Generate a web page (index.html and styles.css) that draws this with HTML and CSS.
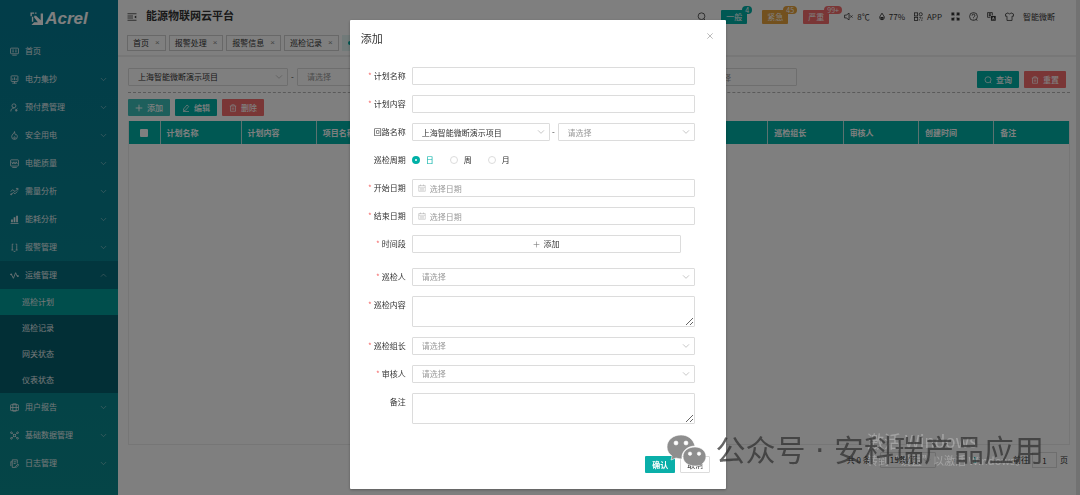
FILE: index.html
```html
<!DOCTYPE html>
<html lang="zh-CN">
<head>
<meta charset="utf-8">
<meta name="viewport" content="width=device-width, initial-scale=1">
<title>能源物联网云平台</title>
<link rel="stylesheet" href="styles.css">
</head>
<body>
<svg class="defs" aria-hidden="true">
  <symbol id="down" viewBox="0 0 12 12"><path d="M1.5 3.5 6 8l4.500-4.500"/></symbol>
  <symbol id="up" viewBox="0 0 12 12"><path d="M1.500 8 6 3.500 10.500 8"/></symbol>
  <symbol id="plus" viewBox="0 0 12 12"><path d="M6 1v10M1 6h10"/></symbol>
  <symbol id="trash" viewBox="0 0 16 16"><path d="M1.500 4h13M5.500 4V1.500h5V4M3 4v10.500h10V4M6.500 7v4.500M9.500 7v4.500"/></symbol>
  <symbol id="edit" viewBox="0 0 16 16"><path d="M3 10 10 2l3.500 3L7 12.500l-4 .8zM2 15h12"/></symbol>
  <symbol id="search" viewBox="0 0 16 16"><circle cx="8" cy="7.500" r="6"/><path d="m12 12 2.500 2.500"/></symbol>
  <symbol id="calendar" viewBox="0 0 16 16"><path d="M1.500 3h13v11.500h-13zM1.500 6.500h13M5 1v3M11 1v3M4 9.500h8M4 12h8"/></symbol>
</svg>
<div class="app">
  <aside class="sidebar">
    <div class="logo">
      <svg class="logo-mark" viewBox="0 0 28 28"><path d="M1 9V1h8v3H4v5zM4 10h3v11H4zM11 1h3v3h-3zM23 3h5v25H3l6-6h8L9 12V8h4l10 10z"/></svg>
      <span>Acrel</span>
    </div>
    <nav class="menu">
      <a class="item" href="#"><svg class="ico" viewBox="0 0 16 16"><rect x="1" y="2" width="14" height="10" rx="1"/><path d="M4 5.500h3M4 8.500h3M9 5.500h3M9 8.500h3M4 14.500h8"/></svg><span>首页</span></a>
      <a class="item" href="#"><svg class="ico" viewBox="0 0 16 16"><rect x="2" y="1.500" width="12" height="10" rx="1"/><path d="M5 9V6M8 9V4M11 9V6M8 12v3M4 14.500h8"/></svg><span>电力集抄</span><svg class="arrow"><use href="#down"/></svg></a>
      <a class="item" href="#"><svg class="ico" viewBox="0 0 16 16"><circle cx="7" cy="5" r="3.500"/><path d="M1.500 15c0-4 2-6 5.500-6M9 10l2 2 2-2M11 12v3.500M9 13h4.500"/></svg><span>预付费管理</span><svg class="arrow"><use href="#down"/></svg></a>
      <a class="item" href="#"><svg class="ico" viewBox="0 0 16 16"><path d="M8 1c0 3-5 5-5 9a5 5 0 0 0 10 0c0-2-1-3.500-2-4-1 2-2 1-3-5z"/><path d="M8 14c-2-1.500-1-3 0-4 1 1 2 2.500 0 4z"/></svg><span>安全用电</span><svg class="arrow"><use href="#down"/></svg></a>
      <a class="item" href="#"><svg class="ico" viewBox="0 0 16 16"><rect x="1" y="1.500" width="14" height="11" rx="1"/><path d="m3 5 2 4 2-4 2 4 2-4 2 4M4 15h8"/></svg><span>电能质量</span><svg class="arrow"><use href="#down"/></svg></a>
      <a class="item" href="#"><svg class="ico" viewBox="0 0 16 16"><path d="m1 8 4-3 4 3 5-5M10.500 2.500H14V6M2 13l4-3 3 2 4-4"/><circle cx="2" cy="13" r="1"/></svg><span>需量分析</span><svg class="arrow"><use href="#down"/></svg></a>
      <a class="item" href="#"><svg class="ico solid" viewBox="0 0 16 16"><path d="M2 8h3v5H2zM6.500 4h3v9h-3zM11 1.500h3V13h-3zM1 14h14v1.500H1z"/></svg><span>能耗分析</span><svg class="arrow"><use href="#down"/></svg></a>
      <a class="item" href="#"><svg class="ico" viewBox="0 0 16 16"><path d="M6 2H4v2M10 2h2v2M4 4v8.500M12 4v8.500M2.500 12.500H6M10 12.500h3.500M6.500 15h3"/></svg><span>报警管理</span><svg class="arrow"><use href="#down"/></svg></a>
      <a class="item open" href="#"><svg class="ico" viewBox="0 0 16 16"><path d="M1 6h1.500L6 13l4-10 2.500 6H15"/><circle cx="2" cy="6" r="1"/><circle cx="14" cy="9" r="1"/></svg><span>运维管理</span><svg class="arrow"><use href="#up"/></svg></a>
      <div class="submenu">
        <a class="active" href="#">巡检计划</a>
        <a href="#">巡检记录</a>
        <a href="#">网关状态</a>
        <a href="#">仪表状态</a>
      </div>
      <a class="item" href="#"><svg class="ico" viewBox="0 0 16 16"><rect x="1" y="3" width="14" height="10.500" rx="1"/><path d="M5 1.500v13M11 1.500v13M1 8h14M5 1.500h6M5 14.500h6"/></svg><span>用户报告</span><svg class="arrow"><use href="#down"/></svg></a>
      <a class="item" href="#"><svg class="ico" viewBox="0 0 16 16"><circle cx="2.500" cy="3" r="1.500"/><circle cx="13.500" cy="3" r="1.500"/><circle cx="2.500" cy="13" r="1.500"/><circle cx="13.500" cy="13" r="1.500"/><circle cx="8" cy="8" r="2"/><path d="m4 4 3 3M12 4 9 7M4 12l3-3M12 12 9 9"/></svg><span>基础数据管理</span><svg class="arrow"><use href="#down"/></svg></a>
      <a class="item" href="#"><svg class="ico" viewBox="0 0 16 16"><path d="M13 8V1.500H4V15h5M1.500 4.500v8M1.500 5H4M6.500 5H11M6.500 8H10M9 14l5-5 1.500 1.500-5 5z"/></svg><span>日志管理</span><svg class="arrow"><use href="#down"/></svg></a>
    </nav>
  </aside>

  <div class="main">
    <header class="header">
      <div class="topbar">
        <svg class="fold" viewBox="0 0 20 16"><path d="M1 1.500h18M1 6h11M1 10h11M1 14.500h18"/><path class="fill" d="m18.500 5-4 3 4 3z"/></svg>
        <h1>能源物联网云平台</h1>
        <div class="alerts">
          <svg class="ico"><use href="#search"/></svg>
          <span class="tag teal">一般<b>4</b></span>
          <span class="tag amber">紧急<b>45</b></span>
          <span class="tag red">严重<b>99+</b></span>
        </div>
        <div class="tools">
          <span class="tool"><svg class="ico" viewBox="0 0 16 16"><path d="M1 5.500h3L9 2v12l-5-3.500H1zM11 6l4 4M15 6l-4 4"/></svg>8℃</span>
          <span class="tool"><svg class="ico drop" viewBox="0 0 12 16"><path d="M6 1.500C4 5 1.500 7 1.500 10a4.500 4.500 0 0 0 9 0C10.500 7 8 5 6 1.500z"/><path d="M3 10h6M4 12.500h4"/></svg>77%</span>
          <span class="tool"><svg class="ico" viewBox="0 0 16 16"><rect x="1" y="1.500" width="5.500" height="5.500"/><circle cx="12" cy="4" r="2.800"/><rect x="1" y="9.500" width="5.500" height="5.500"/><path d="M9.500 9.500h2v2M14.500 9.500v2.500M9.500 15v-2M12.500 14.500h2.500"/></svg>APP</span>
          <svg class="ico bold" viewBox="0 0 16 16"><path d="M2 6V2h4M2 2l4 4M10 2h4v4M14 2l-4 4M2 10v4h4M2 14l4-4M14 10v4h-4M14 14l-4-4"/></svg>
          <svg class="ico" viewBox="0 0 16 16"><circle cx="8" cy="8" r="7"/><path d="M5.500 6.500a2.500 2.500 0 1 1 3.500 2c-1 .5-1 1-1 2M8 12v1.200M12 13l3 2"/></svg>
          <svg class="ico" viewBox="0 0 16 16"><path d="M9.500 6V1H1v8.500h5M3 3.500h4.500M3 6h4M5 2v6"/><path class="fill" d="M7 7h8.500v8.500H7z"/><path class="cut" d="m9.500 13.500 1.700-4.500 1.800 4.500M10 12h2.500"/></svg>
          <svg class="ico" viewBox="0 0 16 16"><path d="M5.500 1.500 1 3.500v4h2.500v7.500h9V7.500H15v-4l-4.500-2C10 4 6 4 5.500 1.500z"/></svg>
          <span>智能微断</span>
        </div>
      </div>
      <nav class="tabs">
        <a href="#">首页<i>×</i></a>
        <a href="#">报警处理<i>×</i></a>
        <a href="#">报警信息<i>×</i></a>
        <a href="#">巡检记录<i>×</i></a>
        <a class="current" href="#">巡检计划<i>×</i></a>
      </nav>
    </header>

    <main class="content">
      <div class="filter">
        <div class="fields">
          <div class="control"><select aria-label="项目"><option>上海智能微断演示项目</option></select><svg class="chev"><use href="#down"/></svg></div>
          <span class="dash">-</span>
          <div class="control wide"><select class="empty" aria-label="回路"><option>请选择</option></select><svg class="chev"><use href="#down"/></svg></div>
          <div class="control"><input type="text" aria-label="巡检人" placeholder="请选择"></div>
        </div>
        <div class="actions">
          <button class="btn teal"><svg class="ico"><use href="#search"/></svg>查询</button>
          <button class="btn red"><svg class="ico"><use href="#trash"/></svg>重置</button>
        </div>
      </div>
      <div class="actions bar">
        <button class="btn mint"><svg class="ico"><use href="#plus"/></svg>添加</button>
        <button class="btn teal"><svg class="ico"><use href="#edit"/></svg>编辑</button>
        <button class="btn red"><svg class="ico"><use href="#trash"/></svg>删除</button>
      </div>
      <div class="grid">
        <table>
          <colgroup><col class="c-check"><col class="c-name"><col span="11"></colgroup>
          <thead><tr>
            <th class="pick"><input type="checkbox" aria-label="全选"></th>
            <th>计划名称</th><th>计划内容</th><th>项目名称</th><th>巡检周期</th><th>开始日期</th><th>结束日期</th><th>巡检内容</th><th>巡检人</th><th>巡检组长</th><th>审核人</th><th>创建时间</th><th>备注</th>
          </tr></thead>
        </table>
      </div>
      <footer class="pager">
        <span>共 0 条</span>
        <div class="control size"><select aria-label="每页条数"><option>15条/页</option></select><svg class="chev"><use href="#down"/></svg></div>
        <span class="faint">‹</span><span class="page">1</span><span class="faint">›</span>
        <label class="jump">前往<input type="text" value="1">页</label>
      </footer>
    </main>
  </div>
</div>

<div class="activate"><p class="big">激活 Windows</p><p>转到“设置”以激活 Windows。</p></div>

<div class="mask">
  <form class="dialog" role="dialog" aria-label="添加">
    <div class="dialog-head"><h2>添加</h2><button type="button" class="close" aria-label="关闭"><svg viewBox="0 0 12 12"><path d="m2 2 8 8M10 2l-8 8"/></svg></button></div>
    <div class="row"><label class="req" for="f1">计划名称</label><div class="control"><input id="f1" type="text"></div></div>
    <div class="row"><label class="req" for="f2">计划内容</label><div class="control"><input id="f2" type="text"></div></div>
    <div class="row"><label for="f3">回路名称</label>
      <div class="pair">
        <div class="control"><select id="f3"><option>上海智能微断演示项目</option></select><svg class="chev"><use href="#down"/></svg></div>
        <span>-</span>
        <div class="control"><select class="empty" aria-label="回路"><option>请选择</option></select><svg class="chev"><use href="#down"/></svg></div>
      </div>
    </div>
    <div class="row"><span class="label">巡检周期</span>
      <div class="radios">
        <label><input type="radio" name="cycle" checked>日</label>
        <label><input type="radio" name="cycle">周</label>
        <label><input type="radio" name="cycle">月</label>
      </div>
    </div>
    <div class="row"><label class="req" for="f5">开始日期</label><div class="control date"><svg class="cal"><use href="#calendar"/></svg><input id="f5" type="text" placeholder="选择日期"></div></div>
    <div class="row"><label class="req" for="f6">结束日期</label><div class="control date"><svg class="cal"><use href="#calendar"/></svg><input id="f6" type="text" placeholder="选择日期"></div></div>
    <div class="row spaced"><label class="req" for="f7">时间段</label><div class="slot"><button id="f7" type="button" class="add"><svg><use href="#plus"/></svg>添加</button></div></div>
    <div class="row"><label class="req" for="f8">巡检人</label><div class="control"><select id="f8" class="empty"><option>请选择</option></select><svg class="chev"><use href="#down"/></svg></div></div>
    <div class="row"><label class="req" for="f9">巡检内容</label><textarea id="f9"></textarea></div>
    <div class="row"><label class="req" for="f10">巡检组长</label><div class="control"><select id="f10" class="empty"><option>请选择</option></select><svg class="chev"><use href="#down"/></svg></div></div>
    <div class="row"><label class="req" for="f11">审核人</label><div class="control"><select id="f11" class="empty"><option>请选择</option></select><svg class="chev"><use href="#down"/></svg></div></div>
    <div class="row"><label for="f12">备注</label><textarea id="f12"></textarea></div>
    <div class="dialog-foot"><button type="button" class="ok">确认</button><button type="button" class="cancel">取消</button></div>
  </form>
</div>

<div class="brand">
  <svg viewBox="0 0 40 34"><path fill-rule="evenodd" d="M15 1C7 1 1 6 1 13c0 4 2 7 5 9l-1 4 5-2c2 .6 4 1 6 1-1-7 5-13 13-13C27 5 22 1 15 1zM10 7a2 2 0 1 1 0 4 2 2 0 0 1 0-4zm10 0a2 2 0 1 1 0 4 2 2 0 0 1 0-4z"/><path fill-rule="evenodd" d="M29 13c-7 0-12 4-12 9.500S22 32 29 32c1.500 0 3-.2 4-.6l4 2-1-3.400c2.500-2 4-4.500 4-7.500C40 17 35 13 29 13zm-5 5a1.700 1.700 0 1 1 0 3.400 1.700 1.700 0 0 1 0-3.400zm9 0a1.700 1.700 0 1 1 0 3.400 1.700 1.700 0 0 1 0-3.400z"/></svg>
  <span>公众号 · 安科瑞产品应用</span>
</div>
</body>
</html>
```
FILE: styles.css
```css
* { box-sizing: border-box; margin: 0; }

body {
  font: 8px/12px "Noto Sans CJK SC", "Noto Sans", sans-serif;
  color: #333;
  background: #fff;
}

a { color: inherit; text-decoration: none; }
button, input, select, textarea { font: inherit; color: inherit; }
svg { fill: none; stroke: currentColor; flex: none; }
.defs { display: none; }
.fill { fill: currentColor; stroke: none; }
.ico { width: 9px; height: 9px; stroke-width: 1.4; }
.ico.solid { fill: currentColor; stroke: none; }
.ico.bold { stroke-width: 2.4; }
.ico.drop { width: 6px; stroke-width: 2; }
.cut { stroke: #fff; }

.app { display: flex; min-height: 100vh; }

/* Sidebar */
.sidebar {
  width: 118px;
  flex: none;
  color: #e8f0f2;
  background: linear-gradient(#047a92, #0a8a8e);
}
.logo {
  display: flex;
  align-items: center;
  justify-content: center;
  gap: 2px;
  height: 37px;
  color: #fff;
  font: italic bold 17px/20px "Liberation Sans", Arial, sans-serif;
}
.logo-mark { width: 13px; height: 13px; fill: currentColor; stroke: none; }
.item {
  display: flex;
  align-items: center;
  gap: 6px;
  height: 28px;
  padding: 0 11px 0 10px;
}
.item span { flex: 1; }
.arrow { width: 7px; height: 7px; opacity: .7; }
.item.open { background: #046c7c; }
.submenu { background: #045e6c; }
.submenu a { display: block; padding: 7px 0 7px 22px; }
.submenu .active { background: #009c98; }

/* Header */
.main { flex: 1; min-width: 0; display: flex; flex-direction: column; border-right: 4px solid #e4e4e4; }
.header { border-bottom: 2px solid #eee; padding: 0 9px 4px; }
.topbar { display: flex; align-items: center; height: 35px; padding: 0 12px 2px 0; }
.fold { width: 10px; height: 8px; stroke-width: 1.6; margin-right: 9px; }
h1 { font-size: 11px; line-height: 16px; font-weight: 600; flex: 1; padding-bottom: 4px; }
.alerts { display: flex; align-items: center; gap: 15px; margin-right: 15px; }
.tag { position: relative; padding: 1px 5px; border-radius: 1px; color: #fff; }
.tag b {
  position: absolute;
  left: 21px;
  top: -4px;
  padding: 0 3px;
  border-radius: 4px;
  font-size: 7px;
  line-height: 8px;
  font-weight: 400;
  background: inherit;
}
.teal { background: #00b0a6; }
.amber { background: #e6a23c; }
.red { background: #f56c6c; }
.mint { background: #3cbfb8; }
.tools { display: flex; align-items: center; gap: 9px; }
.tool { display: flex; align-items: center; gap: 4px; }
.tabs { display: flex; gap: 3px; }
.tabs a {
  display: flex;
  align-items: center;
  gap: 6px;
  height: 16px;
  padding: 0 5px;
  border: 1px solid #d0d0d0;
}
.tabs i { font-family: "Liberation Sans", Arial, sans-serif; font-style: normal; color: #888; }
.tabs .current { gap: 4px; background: #e2f5f3; border-color: #e2f5f3; }
.tabs .current::before { content: ""; width: 4px; height: 4px; border-radius: 50%; background: #00b0a6; }

/* Content */
.content { flex: 1; display: flex; flex-direction: column; padding: 11px 6px 0 10px; }
.filter {
  display: flex;
  justify-content: space-between;
  padding-bottom: 4px;
  border-bottom: 1px dashed #b4b4b4;
}
.fields { display: flex; width: 71%; height: 18px; }
.fields .control { flex: 0 0 160px; }
.fields .control.wide { margin-right: 240px; }
.fields .control:last-child { flex: 1; min-width: 0; }
.dash { width: 9px; text-align: center; line-height: 18px; }
.actions { display: flex; gap: 5px; }
.filter .actions { padding: 3px 4px 0 0; }
.bar { padding: 6px 0 5px; }
.btn {
  display: flex;
  align-items: center;
  justify-content: center;
  gap: 4px;
  width: 42px;
  height: 17px;
  padding: 0;
  border: 0;
  border-radius: 1px;
  color: #fff;
  font-weight: 500;
}
.btn .ico { width: 8px; height: 8px; }
.grid { flex: 1; border: 1px solid #ececec; border-top: 0; }
table { width: 100%; table-layout: fixed; border-collapse: collapse; }
.c-check { width: 31px; }
.c-name { width: 81px; }
th {
  height: 23px;
  padding: 0 6px;
  text-align: left;
  font-weight: 600;
  color: #fff;
  background: #00b0a6;
  border-right: 1px solid #b8e4e0;
  white-space: nowrap;
}
th:last-child { border-right: 0; }
.pick { text-align: center; padding: 0; }
.pick input { appearance: none; width: 8px; height: 8px; margin: 0; background: #fff; vertical-align: middle; border-radius: 1px; }
.pager { display: flex; align-items: center; justify-content: flex-end; gap: 9px; height: 50px; padding: 0 2px 20px 0; }
.pager .size { flex: 0 0 56px; height: 16px; }
.faint { color: #aaa; padding: 0 8px; }
.page { color: #00b0a6; }
.jump { display: flex; align-items: center; gap: 3px; }
.jump input { width: 25px; height: 16px; text-align: center; border: 1px solid #ddd; padding: 0; background: #fff; }

/* Form controls */
.control { position: relative; flex: 1; min-width: 0; height: 18px; }
.control input, .control select {
  display: block;
  width: 100%;
  height: 100%;
  padding: 0 9px;
  border: 1px solid #dcdcdc;
  border-radius: 1px;
  background: #fff;
  appearance: none;
  outline: 0;
}
.control select.empty { color: #999; }
::placeholder { color: #999; opacity: 1; }
.chev { position: absolute; right: 5px; top: 5px; width: 8px; height: 8px; color: #aaa; }
.date input { padding-left: 17px; }
.cal { position: absolute; left: 6px; top: 5px; width: 8px; height: 8px; color: #aaa; }

/* Dialog */
.mask {
  position: fixed;
  inset: 0;
  padding: 20px 4px 0 0;
  background: rgba(0, 0, 0, .5);
}
.dialog {
  width: 35%;
  min-width: 300px;
  margin: 0 auto;
  padding: 10px 31px 16px 0;
  border-radius: 1px;
  background: #fff;
  box-shadow: 0 1px 3px rgba(0, 0, 0, .3);
}
.dialog-head { display: flex; justify-content: space-between; margin: 0 -20px 21px 11px; }
h2 { font-size: 11px; line-height: 16px; font-weight: 400; }
.close { border: 0; background: none; padding: 0; width: 9px; height: 12px; color: #999; }
.close svg { display: block; width: 8px; height: 8px; }
.row { display: flex; align-items: flex-start; margin-bottom: 10px; }
.row > label, .row > .label { width: 62px; padding-right: 6px; text-align: right; line-height: 18px; }
.req::before { content: "*"; color: #f56c6c; margin-right: 2px; }
.pair { flex: 1; display: grid; grid-template-columns: 1fr 8px 1fr; text-align: center; line-height: 18px; }
.radios { display: flex; gap: 16px; height: 18px; align-items: center; }
.radios label { display: flex; align-items: center; gap: 6px; }
.radios input { appearance: none; width: 8px; height: 8px; margin: 0; border: 1px solid #dcdcdc; border-radius: 50%; background: #fff; }
.radios input:checked { border: 3px solid #00b0a6; }
.radios label:has(:checked) { color: #00b0a6; }
.slot { flex: 1; }
.add {
  display: flex;
  align-items: center;
  justify-content: center;
  gap: 3px;
  width: 95%;
  height: 18px;
  border: 1px solid #dcdcdc;
  border-radius: 1px;
  background: #fff;
}
.add svg { width: 7px; height: 7px; color: #777; }
.spaced { margin-bottom: 15px; }
textarea { flex: 1; height: 31px; border: 1px solid #dcdcdc; border-radius: 1px; resize: vertical; background: #fff; }
.dialog-foot { display: flex; justify-content: flex-end; gap: 5px; margin: 32px -15px 0 0; }
.dialog-foot button { width: 30px; height: 17px; padding: 0; border-radius: 1px; }
.ok { border: 0; background: #0aafa9; color: #fff; font-weight: 600; }
.cancel { border: 1px solid #dcdcdc; background: #fff; }

/* Overlaid marks */
.activate { position: fixed; z-index: 2; right: 40px; bottom: 27px; width: 173px; color: rgba(255, 255, 255, .28); font-size: 11px; line-height: 16px; white-space: nowrap; }
.activate .big { font-size: 17px; line-height: 22px; }
.brand {
  position: fixed;
  z-index: 3;
  right: 36px;
  bottom: 24px;
  display: flex;
  align-items: center;
  gap: 9px;
  color: rgba(50, 50, 50, .75);
  font-family: "DejaVu Sans", "Noto Sans CJK SC", sans-serif;
  font-size: 30px;
  line-height: 40px;
  white-space: nowrap;
}
.brand svg { width: 40px; height: 34px; fill: #8e8e8e; stroke: #fff; stroke-width: .6; }
```
